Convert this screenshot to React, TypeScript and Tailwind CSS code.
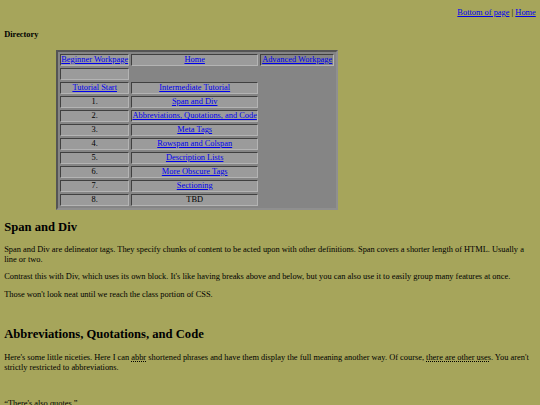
import React from "react";

const lessons: [string, string | null][] = [
  ["1.", "Span and Div"],
  ["2.", "Abbreviations, Quotations, and Code"],
  ["3.", "Meta Tags"],
  ["4.", "Rowspan and Colspan"],
  ["5.", "Description Lists"],
  ["6.", "More Obscure Tags"],
  ["7.", "Sectioning"],
  ["8.", null],
];

const cell =
  "h-[12px] border border-t-[#404040] border-l-[#404040] border-b-[#b4b4b4] border-r-[#b4b4b4] bg-[#9b9b9b] p-0 text-center align-middle leading-[10px]";

const link = "text-[#0000ee] underline";

export default function App() {
  return (
    <div
      className="min-h-[405px] bg-[#a6a55b] px-[4.2px] text-[8.4px] leading-[10px] text-black"
      style={{ fontFamily: '"Liberation Serif", "Times New Roman", serif' }}
    >
      <p className="pt-[8px] text-right">
        <a href="#bottom" className={link}>
          Bottom of page
        </a>{" "}
        |{" "}
        <a href="#" className={link}>
          Home
        </a>
      </p>

      <h4 className="mt-[12px] font-bold">Directory</h4>

      <table className="mt-[10px] ml-[52px] w-[282px] table-fixed border-separate border-spacing-[2px] border-2 border-t-[#555555] border-l-[#555555] border-b-[#8f8f8f] border-r-[#8f8f8f] bg-[#858585]">
        <tbody>
          <tr>
            <td className={`${cell} w-[69px]`}>
              <a href="#" className={link}>
                Beginner Workpage
              </a>
            </td>
            <td className={`${cell} w-[127px]`}>
              <a href="#" className={link}>
                Home
              </a>
            </td>
            <td className={`${cell} w-[74px] bg-[#858585]`}>
              <a href="#" className={link}>
                Advanced Workpage
              </a>
            </td>
          </tr>
          <tr>
            <td className={cell}></td>
          </tr>
          <tr>
            <td className={cell}>
              <a href="#" className={link}>
                Tutorial Start
              </a>
            </td>
            <td className={cell}>
              <a href="#" className={link}>
                Intermediate Tutorial
              </a>
            </td>
          </tr>
          {lessons.map(([num, title]) => (
            <tr key={num}>
              <td className={cell}>{num}</td>
              <td className={cell}>
                {title ? (
                  <a href="#" className={link}>
                    {title}
                  </a>
                ) : (
                  "TBD"
                )}
              </td>
            </tr>
          ))}
        </tbody>
      </table>

      <h2 className="mt-[10px] text-[12.6px] leading-[15px] font-bold">Span and Div</h2>
      <p className="mt-[10px]">
        Span and Div are delineator tags. They specify chunks of content to be acted upon with other
        definitions. Span covers a shorter length of HTML. Usually a line or two.
      </p>
      <p className="mt-[7px]">
        Contrast this with Div, which uses its own block. It's like having breaks above and below, but
        you can also use it to easily group many features at once.
      </p>
      <p className="mt-[8px]">Those won't look neat until we reach the class portion of CSS.</p>

      <h2 className="mt-[27px] text-[12.6px] leading-[15px] font-bold">
        Abbreviations, Quotations, and Code
      </h2>
      <p className="mt-[11px]">
        Here's some little niceties. Here I can{" "}
        <abbr title="abbreviate" className="underline decoration-dotted">
          abbr
        </abbr>{" "}
        shortened phrases and have them display the full meaning another way. Of course,{" "}
        <abbr title="like tooltips" className="underline decoration-dotted">
          there are other uses
        </abbr>
        . You aren't strictly restricted to abbreviations.
      </p>
      <p className="mt-[26px] pb-[20px]">
        <q>There's also quotes.</q>
      </p>
    </div>
  );
}
